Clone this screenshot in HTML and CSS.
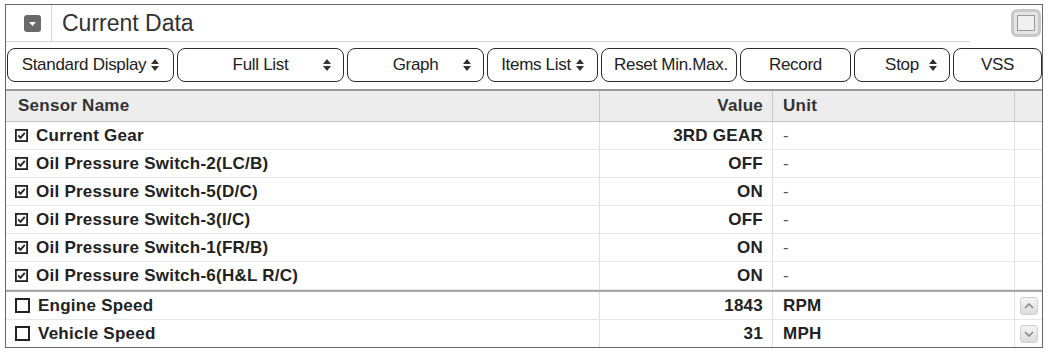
FILE: index.html
```html
<!DOCTYPE html>
<html lang="en">
  <head>
    <meta charset="UTF-8" />
    <meta name="viewport" content="width=device-width, initial-scale=1" />
    <title>Current Data</title>
    <link rel="stylesheet" href="styles.css">
  </head>
  <body>
    <div class="panel">
      <div class="titlebar">
        <div class="title-main">
          <div class="title-icon-cell">
            <svg class="collapse-icon" width="17" height="17" viewBox="0 0 17 17">
              <rect x="0" y="0" width="17" height="17" rx="3" fill="#6a6a6a" />
              <path d="M5 7h7l-3.5 4z" fill="#fff" />
            </svg>
          </div>
          <h1 class="title">Current Data</h1>
        </div>
        <div class="title-side">
          <span class="max-icon"><span></span></span>
        </div>
      </div>

      <div class="toolbar">
        <button class="btn btn-tight w-std"><span class="label">Standard Display</span><svg class="spin" width="8" height="12" viewBox="0 0 8 12"><path d="M0 5h8L4 0zM0 7h8l-4 5z" fill="#333"/></svg></button>
        <button class="btn w-full"><span class="label">Full List</span><svg class="spin" width="8" height="12" viewBox="0 0 8 12"><path d="M0 5h8L4 0zM0 7h8l-4 5z" fill="#333"/></svg></button>
        <button class="btn w-graph"><span class="label">Graph</span><svg class="spin" width="8" height="12" viewBox="0 0 8 12"><path d="M0 5h8L4 0zM0 7h8l-4 5z" fill="#333"/></svg></button>
        <button class="btn btn-tight w-items"><span class="label">Items List</span><svg class="spin" width="8" height="12" viewBox="0 0 8 12"><path d="M0 5h8L4 0zM0 7h8l-4 5z" fill="#333"/></svg></button>
        <button class="btn w-reset"><span class="label">Reset Min.Max.</span></button>
        <button class="btn w-record"><span class="label">Record</span></button>
        <button class="btn w-stop"><span class="label">Stop</span><svg class="spin" width="8" height="12" viewBox="0 0 8 12"><path d="M0 5h8L4 0zM0 7h8l-4 5z" fill="#333"/></svg></button>
        <button class="btn w-vss"><span class="label">VSS</span></button>
      </div>

      <div class="grid">
        <div class="row head">
          <div class="cell name">Sensor Name</div>
          <div class="cell value">Value</div>
          <div class="cell unit">Unit</div>
          <div class="cell side"></div>
        </div>

        <div class="section">
          <div class="row">
            <div class="cell name"><svg class="cb" width="13" height="13" viewBox="0 0 13 13"><rect x="0.9" y="0.9" width="11.2" height="11.2" fill="#fff" stroke="#222" stroke-width="1.8"/><path d="M3.2 6.4l2.3 2.4 4.3-4.9" fill="none" stroke="#222" stroke-width="1.8"/></svg>Current Gear</div>
            <div class="cell value">3RD GEAR</div>
            <div class="cell unit dash">-</div>
            <div class="cell side"></div>
          </div>
          <div class="row">
            <div class="cell name"><svg class="cb" width="13" height="13" viewBox="0 0 13 13"><rect x="0.9" y="0.9" width="11.2" height="11.2" fill="#fff" stroke="#222" stroke-width="1.8"/><path d="M3.2 6.4l2.3 2.4 4.3-4.9" fill="none" stroke="#222" stroke-width="1.8"/></svg>Oil Pressure Switch-2(LC/B)</div>
            <div class="cell value">OFF</div>
            <div class="cell unit dash">-</div>
            <div class="cell side"></div>
          </div>
          <div class="row">
            <div class="cell name"><svg class="cb" width="13" height="13" viewBox="0 0 13 13"><rect x="0.9" y="0.9" width="11.2" height="11.2" fill="#fff" stroke="#222" stroke-width="1.8"/><path d="M3.2 6.4l2.3 2.4 4.3-4.9" fill="none" stroke="#222" stroke-width="1.8"/></svg>Oil Pressure Switch-5(D/C)</div>
            <div class="cell value">ON</div>
            <div class="cell unit dash">-</div>
            <div class="cell side"></div>
          </div>
          <div class="row">
            <div class="cell name"><svg class="cb" width="13" height="13" viewBox="0 0 13 13"><rect x="0.9" y="0.9" width="11.2" height="11.2" fill="#fff" stroke="#222" stroke-width="1.8"/><path d="M3.2 6.4l2.3 2.4 4.3-4.9" fill="none" stroke="#222" stroke-width="1.8"/></svg>Oil Pressure Switch-3(I/C)</div>
            <div class="cell value">OFF</div>
            <div class="cell unit dash">-</div>
            <div class="cell side"></div>
          </div>
          <div class="row">
            <div class="cell name"><svg class="cb" width="13" height="13" viewBox="0 0 13 13"><rect x="0.9" y="0.9" width="11.2" height="11.2" fill="#fff" stroke="#222" stroke-width="1.8"/><path d="M3.2 6.4l2.3 2.4 4.3-4.9" fill="none" stroke="#222" stroke-width="1.8"/></svg>Oil Pressure Switch-1(FR/B)</div>
            <div class="cell value">ON</div>
            <div class="cell unit dash">-</div>
            <div class="cell side"></div>
          </div>
          <div class="row">
            <div class="cell name"><svg class="cb" width="13" height="13" viewBox="0 0 13 13"><rect x="0.9" y="0.9" width="11.2" height="11.2" fill="#fff" stroke="#222" stroke-width="1.8"/><path d="M3.2 6.4l2.3 2.4 4.3-4.9" fill="none" stroke="#222" stroke-width="1.8"/></svg>Oil Pressure Switch-6(H&amp;L R/C)</div>
            <div class="cell value">ON</div>
            <div class="cell unit dash">-</div>
            <div class="cell side"></div>
          </div>
        </div>

        <div class="section lower">
          <div class="row">
            <div class="cell name"><svg class="cb" width="15" height="15" viewBox="0 0 15 15"><rect x="1" y="1" width="13" height="13" fill="#fff" stroke="#222" stroke-width="2"/></svg>Engine Speed</div>
            <div class="cell value">1843</div>
            <div class="cell unit">RPM</div>
            <div class="cell side"><span class="scroll-btn"><svg width="10" height="6" viewBox="0 0 10 6"><path d="M1 5l4-4 4 4" fill="none" stroke="#888" stroke-width="1.6"/></svg></span></div>
          </div>
          <div class="row last">
            <div class="cell name"><svg class="cb" width="15" height="15" viewBox="0 0 15 15"><rect x="1" y="1" width="13" height="13" fill="#fff" stroke="#222" stroke-width="2"/></svg>Vehicle Speed</div>
            <div class="cell value">31</div>
            <div class="cell unit">MPH</div>
            <div class="cell side"><span class="scroll-btn"><svg width="10" height="6" viewBox="0 0 10 6"><path d="M1 1l4 4 4-4" fill="none" stroke="#888" stroke-width="1.6"/></svg></span></div>
          </div>
        </div>
      </div>
    </div>
  </body>
</html>
```

FILE: styles.css
```css
body {
  margin: 0;
  background: #fff;
  font-family: "Liberation Sans", Arial, sans-serif;
  color: #222;
}
.panel {
  margin: 4px 0 0 5px;
  width: 1038px;
  height: 344px;
  box-sizing: border-box;
  border: 1px solid #666;
  display: flex;
  flex-direction: column;
}

/* title */
.titlebar {
  display: flex;
  height: 37px;
}
.title-main {
  flex: 1;
  display: flex;
  align-items: stretch;
  border-bottom: 1px solid #d4d4d4;
}
.title-icon-cell {
  width: 46px;
  border-right: 1px solid #d4d4d4;
  display: flex;
  align-items: center;
  padding-left: 18px;
  box-sizing: border-box;
}
.title {
  margin: 0;
  padding-left: 10px;
  font-size: 23px;
  font-weight: normal;
  color: #333;
  display: flex;
  align-items: center;
}
.title-side {
  width: 72px;
  display: flex;
  align-items: center;
  justify-content: flex-end;
  padding-right: 1px;
  box-sizing: border-box;
}
.max-icon {
  width: 30px;
  height: 28px;
  box-sizing: border-box;
  border: 3px solid #c8c8c8;
  border-radius: 6px;
  background: #e4e4e4;
  display: flex;
  align-items: center;
  justify-content: center;
  margin-top: -2px;
}
.max-icon span {
  width: 16px;
  height: 14px;
  border: 1px solid #9a9a9a;
  background: #efefef;
}

/* toolbar */
.toolbar {
  display: flex;
  gap: 3px;
  height: 47px;
  padding: 6px 0 7px 1px;
  box-sizing: border-box;
}
.btn {
  display: grid;
  grid-template-columns: 1fr auto 1fr;
  align-items: center;
  height: 34px;
  padding: 0 12px;
  box-sizing: border-box;
  border: 1px solid #2a2a2a;
  border-radius: 8px;
  background: #fff;
  font-family: "Liberation Sans", Arial, sans-serif;
  font-size: 17px;
  letter-spacing: -0.3px;
  color: #222;
}
.btn .label {
  grid-column: 2;
  white-space: nowrap;
}
.btn .spin {
  grid-column: 3;
  justify-self: end;
}
.btn-tight {
  display: flex;
  justify-content: center;
  gap: 5px;
  padding: 0 6px;
}
.w-std { width: 167px; }
.w-full { width: 167px; }
.w-graph { width: 137px; }
.w-items { width: 111px; }
.w-reset { width: 136px; }
.w-record { width: 111px; }
.w-stop { width: 96px; }
.w-vss { width: 89px; }

/* data grid */
.grid {
  border-top: 2px solid #9a9a9a;
  font-weight: bold;
  font-size: 17px;
  letter-spacing: 0.25px;
}
.row {
  display: grid;
  grid-template-columns: 594px 173px 242px 27px;
  height: 28px;
  box-sizing: border-box;
  border-bottom: 1px solid #e6e6e6;
}
.row.head {
  height: 31px;
  background: #ededed;
  border-bottom: 1px solid #c4c4c4;
  color: #333;
}
.row.last {
  height: 27px;
  border-bottom: 0;
}
.lower {
  border-top: 2px solid #a8a8a8;
}
.cell {
  display: flex;
  align-items: center;
  border-right: 1px solid #e0e0e0;
  box-sizing: border-box;
  white-space: nowrap;
}
.head .cell {
  border-right-color: #c8c8c8;
}
.cell.side {
  border-right: 0;
  justify-content: center;
}
.cell.name {
  padding-left: 9px;
  gap: 8px;
}
.head .cell.name {
  padding-left: 12px;
}
.cell.value {
  justify-content: flex-end;
  padding-right: 9px;
}
.cell.unit {
  padding-left: 10px;
}
.cell.dash {
  font-weight: normal;
  color: #555;
}
.cb {
  flex: none;
}
.scroll-btn {
  width: 18px;
  height: 18px;
  box-sizing: border-box;
  border: 1px solid #cfcfcf;
  border-radius: 3px;
  background: linear-gradient(#f4f4f4, #dcdcdc);
  display: flex;
  align-items: center;
  justify-content: center;
}
```
